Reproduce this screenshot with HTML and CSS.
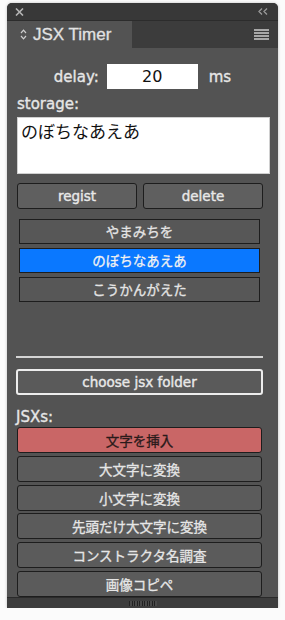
FILE: index.html
```html
<!DOCTYPE html>
<html lang="ja">
<head>
    <meta charset="UTF-8">
    <title>JSX Timer</title>
    <link rel="stylesheet" href="styles.css">
</head>
<body>

    <div class="panel">
        <!-- 상단 바 : 닫기 / 접기 -->
        <div class="titlebar">
            <svg class="close" width="9" height="8" viewBox="0 0 9 8">
                <path d="M1 0.5 L8 7.5 M8 0.5 L1 7.5" stroke="#b5b5b5" stroke-width="1.6"/>
            </svg>
            <svg class="collapse" width="10" height="7" viewBox="0 0 10 7">
                <path d="M4 0.5 L1 3.5 L4 6.5 M9 0.5 L6 3.5 L9 6.5" stroke="#9a9a9a" stroke-width="1.3" fill="none"/>
            </svg>
        </div>

        <div class="tabs">
            <div class="tab">
                <svg class="updown" width="7" height="11" viewBox="0 0 7 11">
                    <path d="M1 4 L3.5 1.2 L6 4 M1 7 L3.5 9.8 L6 7" stroke="#cfcfcf" stroke-width="1.2" fill="none"/>
                </svg>
                JSX Timer
            </div>
            <div class="menu">
                <span></span><span></span><span></span><span></span>
            </div>
        </div>

        <div class="content">
            <div class="delay-row">
                <label class="lbl">delay:</label>
                <input type="text" value="20" class="delay">
                <span class="lbl">ms</span>
            </div>

            <div class="lbl storage-lbl">storage:</div>
            <textarea class="storage">のぼちなあえあ</textarea>

            <div class="btn-row">
                <button class="btn">regist</button>
                <button class="btn">delete</button>
            </div>

            <ul class="list">
                <li>やまみちを</li>
                <li class="selected">のぼちなあえあ</li>
                <li>こうかんがえた</li>
            </ul>

            <hr class="sep">

            <button class="btn folder">choose jsx folder</button>

            <div class="lbl jsx-lbl">JSXs:</div>
            <div class="jsx-list">
                <button class="jsx active">文字を挿入</button>
                <button class="jsx">大文字に変換</button>
                <button class="jsx">小文字に変換</button>
                <button class="jsx">先頭だけ大文字に変換</button>
                <button class="jsx">コンストラクタ名調査</button>
                <button class="jsx">画像コピペ</button>
            </div>
        </div>

        <div class="footer">
            <div class="grip"></div>
        </div>
    </div>

</body>
</html>
```

FILE: styles.css
```css
body{
    margin: 0;
    background-color: #fbfbfb;
    font-family: "DejaVu Sans", "Noto Sans CJK JP", sans-serif;
}

.panel{
    margin: 3px 0 0 7px;
    width: 271px;
    height: 605px;
    background-color: #535353;
    border-radius: 5px 5px 0 0;
    overflow: hidden;
    display: flex;
    flex-direction: column;
    box-shadow: 0 0 3px rgba(0,0,0,0.25);
}

/* 상단 바 */
.titlebar{
    height: 17px;
    background-color: #383838;
    display: flex;
    align-items: center;
    justify-content: space-between;
    padding: 0 10px 0 8px;
    flex-shrink: 0;
}

.tabs{
    height: 28px;
    background-color: #3c3c3c;
    border-top: 1px solid #2c2c2c;
    box-sizing: border-box;
    display: flex;
    justify-content: space-between;
    flex-shrink: 0;
}
.tab{
    width: 125px;
    background-color: #535353;
    color: #e2e2e2;
    font-family: "Liberation Sans", sans-serif;
    font-size: 17px;
    -webkit-text-stroke: 0.3px #e2e2e2;
    display: flex;
    align-items: center;
    padding-left: 13px;
    box-sizing: border-box;
}
.updown{
    margin-right: 6px;
}
.menu{
    display: flex;
    flex-direction: column;
    justify-content: center;
    gap: 1.6px;
    padding-right: 9px;
}
.menu span{
    display: block;
    width: 15px;
    height: 1.5px;
    background-color: #a8a8a8;
}

.content{
    flex: 1;
    overflow: hidden;
    padding: 0 0 0 10px;
    color: #e6e6e6;
    display: flex;
    flex-direction: column;
    align-items: flex-start;
}

.lbl{
    font-size: 15px;
    line-height: 20px;
    color: #e6e6e6;
    -webkit-text-stroke: 0.35px #e6e6e6;
}

.delay-row{
    margin-top: 16px;
    align-self: stretch;
    display: flex;
    align-items: center;
    justify-content: center;
    padding-right: 10px;
    height: 25px;
}
.delay{
    width: 91px;
    height: 25px;
    box-sizing: border-box;
    margin: 0 11px 0 8px;
    border: none;
    text-align: center;
    font-family: "DejaVu Sans", sans-serif;
    font-size: 16px;
    color: #111;
    padding: 0;
}

.storage-lbl{
    margin-top: 5px;
}
.storage{
    margin-top: 3px;
    width: 253px;
    height: 61px;
    box-sizing: border-box;
    border: 1px solid #d0d0d0;
    resize: none;
    padding: 2px 3px;
    font-family: "Noto Sans CJK JP", sans-serif;
    font-size: 17px;
    line-height: 22px;
    color: #111;
}

/* 버튼 공통 */
button{
    font-family: "DejaVu Sans", "Noto Sans CJK JP", sans-serif;
    cursor: pointer;
}
.btn-row{
    margin-top: 9px;
    display: flex;
    gap: 6px;
}
.btn{
    width: 120px;
    height: 26px;
    background-color: #5f5f5f;
    border: 1.5px solid #1d1d1d;
    border-radius: 3px;
    color: #e8e8e8;
    font-size: 13.5px;
    -webkit-text-stroke: 0.4px #e8e8e8;
    padding: 0;
}

.list{
    list-style: none;
    margin: 10px 0 0 2px;
    padding: 0;
    display: flex;
    flex-direction: column;
    gap: 4px;
}
.list li{
    width: 241px;
    height: 25px;
    box-sizing: border-box;
    border: 1.5px solid #1d1d1d;
    background-color: #575757;
    color: #e4e4e4;
    font-family: "Noto Sans CJK JP", sans-serif;
    font-size: 13.5px;
    -webkit-text-stroke: 0.3px #e4e4e4;
    text-align: center;
    line-height: 22px;
}
.list li.selected{
    background-color: #0a78ff;
    color: #f2f2f2;
    -webkit-text-stroke: 0.3px #f2f2f2;
}

.sep{
    margin: 54px 0 0 -1px;
    width: 247px;
    height: 2px;
    border: none;
    background-color: #d4d4d4;
}

.folder{
    margin: 11px 0 0 -1px;
    width: 247px;
    height: 28px;
    border: 2px solid #ededed;
    background-color: #5a5a5a;
}

.jsx-lbl{
    margin: 12px 0 0 -1px;
}
.jsx-list{
    display: flex;
    flex-direction: column;
    gap: 2.8px;
}
.jsx{
    width: 245px;
    height: 26px;
    background-color: #5b5b5b;
    border: 1.5px solid #1d1d1d;
    border-radius: 3px;
    color: #e6e6e6;
    font-family: "Noto Sans CJK JP", sans-serif;
    font-size: 13.5px;
    -webkit-text-stroke: 0.3px #e6e6e6;
    padding: 0;
    flex-shrink: 0;
}
.jsx.active{
    background-color: #c96666;
    color: #2a1a1a;
    -webkit-text-stroke: 0.3px #2a1a1a;
}

.footer{
    height: 11px;
    background-color: #3d3d3d;
    border-top: 1px solid #2a2a2a;
    box-sizing: border-box;
    display: flex;
    justify-content: center;
    align-items: center;
    flex-shrink: 0;
}
.grip{
    width: 28px;
    height: 5px;
    background: repeating-linear-gradient(to right, #222 0 1px, #4a4a4a 1px 2.5px);
}
```
